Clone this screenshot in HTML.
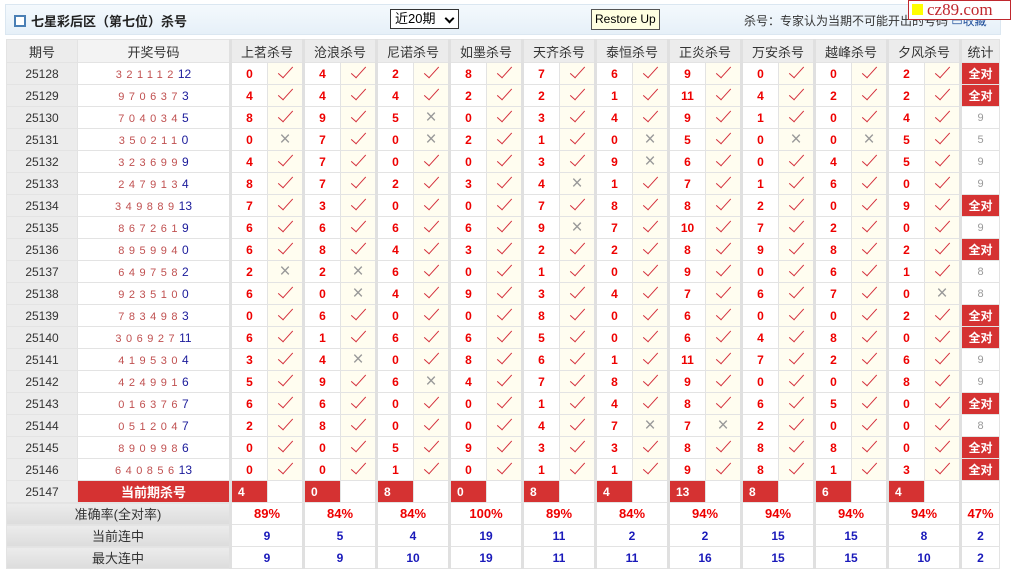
<!DOCTYPE html>
<html><head><meta charset="utf-8"><style>
body{margin:0;width:1012px;height:577px;background:#fff;font-family:"Liberation Sans","Noto Sans CJK SC",sans-serif;position:relative;overflow:hidden}
.top{position:absolute;left:5px;top:4px;width:994px;height:29px;background:linear-gradient(#f4f9fd,#e6f0f8);border:1px solid #dbe7f1}
.title{position:absolute;left:8px;top:6px;font-size:13px;font-weight:bold;color:#222}
.title i{display:inline-block;width:8px;height:8px;border:2px solid #4a7fb5;margin-right:5px;vertical-align:-1px;background:#fff}
.sel{position:absolute;left:384px;top:4px;width:69px;border:1px solid #333;background:#fff;font-size:13px;line-height:18px;padding-left:4px;box-sizing:border-box;height:20px}
.sel b{position:absolute;right:5px;top:5px;width:5px;height:5px;border:solid #000;border-width:0 2px 2px 0;transform:rotate(45deg)}
.tip{position:absolute;left:585px;top:4px;height:19px;padding:0 3px;border:1px solid #555;background:#ffffe1;font-size:12px;line-height:19px}
.rt{position:absolute;left:738px;top:7px;font-size:12px;color:#333}
.rt span{color:#1f4e9a}
.logo{position:absolute;left:908px;top:0;width:101px;height:18px;border:1px solid #c0282e;background:#fff;font-family:"Liberation Serif",serif;color:#c0282e;font-size:17px;line-height:17px}
.logo i{display:inline-block;width:11px;height:11px;background:#ff0;margin:0 4px 0 3px}
table{position:absolute;left:6px;top:39px;border-collapse:collapse;table-layout:fixed;border:1px solid #d5e2ec;font-size:12px}
td{height:21px;padding:0;border:1px solid #e3e3e3;text-align:center;white-space:nowrap;overflow:hidden}
th{height:22px;padding:0;border:1px solid #e3e3e3;background:#ececec;font-weight:normal;font-size:13px;color:#333}
td.q{background:#ececec;color:#333;font-size:12px}
td.k{color:#c05050;letter-spacing:4.5px;font-size:11px}
td.k span{color:#1a1a9a;letter-spacing:0;font-size:12px}
.g{border-left:3px solid #e0e0e0}
td.n{color:#e00;font-weight:bold;font-size:12px}
td.c,td.x{background:#fffdf0}
td.c::after{content:"";display:inline-block;width:6px;height:14px;border:solid #d4303c;border-width:0 1.5px 1.5px 0;transform:rotate(42deg);margin-top:-4px}
td.x::after{content:"×";color:#999;font-size:19px;line-height:18px;font-weight:normal}
td.a{background:#d53232;color:#fff;font-weight:bold;font-size:12px}
td.s{color:#999;font-size:11px}
td.r{background:#d53232;color:#fff;font-weight:bold;text-align:left;padding-left:6px}
td.cur{background:#d53232;color:#fff;font-weight:bold;font-size:13px}
td.L{background:linear-gradient(#ececec,#dcdcdc);color:#333;font-size:13px}
td.p{color:#e00;font-weight:bold;font-size:13px}
td.b{color:#1a1aba;font-weight:bold}
</style></head><body>
<div class="top"><div class="title"><i></i>七星彩后区（第七位）杀号</div>
<div class="sel">近20期<b></b></div>
<div class="tip">Restore Up</div>
<div class="rt">杀号：专家认为当期不可能开出的号码 <span>▭收藏</span></div></div>
<div class="logo"><i></i>cz89.com</div>
<table>
<colgroup><col style="width:71px"><col style="width:153px">
<col style="width:37px"><col style="width:36px"><col style="width:37px"><col style="width:36px"><col style="width:37px"><col style="width:36px"><col style="width:37px"><col style="width:36px"><col style="width:37px"><col style="width:36px"><col style="width:37px"><col style="width:36px"><col style="width:37px"><col style="width:36px"><col style="width:37px"><col style="width:36px"><col style="width:37px"><col style="width:36px"><col style="width:37px"><col style="width:36px"><col style="width:39px"></colgroup>
<tr><th>期号</th><th style="background:#f3f3f3">开奖号码</th><th colspan=2 class="g">上茗杀号</th><th colspan=2 class="g">沧浪杀号</th><th colspan=2 class="g">尼诺杀号</th><th colspan=2 class="g">如墨杀号</th><th colspan=2 class="g">天齐杀号</th><th colspan=2 class="g">泰恒杀号</th><th colspan=2 class="g">正炎杀号</th><th colspan=2 class="g">万安杀号</th><th colspan=2 class="g">越峰杀号</th><th colspan=2 class="g">夕风杀号</th><th class="g">统计</th></tr>
<tr><td class=q>25128</td><td class=k>321112<span>12</span></td><td class="n g">0</td><td class=c></td><td class="n g">4</td><td class=c></td><td class="n g">2</td><td class=c></td><td class="n g">8</td><td class=c></td><td class="n g">7</td><td class=c></td><td class="n g">6</td><td class=c></td><td class="n g">9</td><td class=c></td><td class="n g">0</td><td class=c></td><td class="n g">0</td><td class=c></td><td class="n g">2</td><td class=c></td><td class="a g">全对</td></tr>
<tr><td class=q>25129</td><td class=k>970637<span>3</span></td><td class="n g">4</td><td class=c></td><td class="n g">4</td><td class=c></td><td class="n g">4</td><td class=c></td><td class="n g">2</td><td class=c></td><td class="n g">2</td><td class=c></td><td class="n g">1</td><td class=c></td><td class="n g">11</td><td class=c></td><td class="n g">4</td><td class=c></td><td class="n g">2</td><td class=c></td><td class="n g">2</td><td class=c></td><td class="a g">全对</td></tr>
<tr><td class=q>25130</td><td class=k>704034<span>5</span></td><td class="n g">8</td><td class=c></td><td class="n g">9</td><td class=c></td><td class="n g">5</td><td class=x></td><td class="n g">0</td><td class=c></td><td class="n g">3</td><td class=c></td><td class="n g">4</td><td class=c></td><td class="n g">9</td><td class=c></td><td class="n g">1</td><td class=c></td><td class="n g">0</td><td class=c></td><td class="n g">4</td><td class=c></td><td class="s g">9</td></tr>
<tr><td class=q>25131</td><td class=k>350211<span>0</span></td><td class="n g">0</td><td class=x></td><td class="n g">7</td><td class=c></td><td class="n g">0</td><td class=x></td><td class="n g">2</td><td class=c></td><td class="n g">1</td><td class=c></td><td class="n g">0</td><td class=x></td><td class="n g">5</td><td class=c></td><td class="n g">0</td><td class=x></td><td class="n g">0</td><td class=x></td><td class="n g">5</td><td class=c></td><td class="s g">5</td></tr>
<tr><td class=q>25132</td><td class=k>323699<span>9</span></td><td class="n g">4</td><td class=c></td><td class="n g">7</td><td class=c></td><td class="n g">0</td><td class=c></td><td class="n g">0</td><td class=c></td><td class="n g">3</td><td class=c></td><td class="n g">9</td><td class=x></td><td class="n g">6</td><td class=c></td><td class="n g">0</td><td class=c></td><td class="n g">4</td><td class=c></td><td class="n g">5</td><td class=c></td><td class="s g">9</td></tr>
<tr><td class=q>25133</td><td class=k>247913<span>4</span></td><td class="n g">8</td><td class=c></td><td class="n g">7</td><td class=c></td><td class="n g">2</td><td class=c></td><td class="n g">3</td><td class=c></td><td class="n g">4</td><td class=x></td><td class="n g">1</td><td class=c></td><td class="n g">7</td><td class=c></td><td class="n g">1</td><td class=c></td><td class="n g">6</td><td class=c></td><td class="n g">0</td><td class=c></td><td class="s g">9</td></tr>
<tr><td class=q>25134</td><td class=k>349889<span>13</span></td><td class="n g">7</td><td class=c></td><td class="n g">3</td><td class=c></td><td class="n g">0</td><td class=c></td><td class="n g">0</td><td class=c></td><td class="n g">7</td><td class=c></td><td class="n g">8</td><td class=c></td><td class="n g">8</td><td class=c></td><td class="n g">2</td><td class=c></td><td class="n g">0</td><td class=c></td><td class="n g">9</td><td class=c></td><td class="a g">全对</td></tr>
<tr><td class=q>25135</td><td class=k>867261<span>9</span></td><td class="n g">6</td><td class=c></td><td class="n g">6</td><td class=c></td><td class="n g">6</td><td class=c></td><td class="n g">6</td><td class=c></td><td class="n g">9</td><td class=x></td><td class="n g">7</td><td class=c></td><td class="n g">10</td><td class=c></td><td class="n g">7</td><td class=c></td><td class="n g">2</td><td class=c></td><td class="n g">0</td><td class=c></td><td class="s g">9</td></tr>
<tr><td class=q>25136</td><td class=k>895994<span>0</span></td><td class="n g">6</td><td class=c></td><td class="n g">8</td><td class=c></td><td class="n g">4</td><td class=c></td><td class="n g">3</td><td class=c></td><td class="n g">2</td><td class=c></td><td class="n g">2</td><td class=c></td><td class="n g">8</td><td class=c></td><td class="n g">9</td><td class=c></td><td class="n g">8</td><td class=c></td><td class="n g">2</td><td class=c></td><td class="a g">全对</td></tr>
<tr><td class=q>25137</td><td class=k>649758<span>2</span></td><td class="n g">2</td><td class=x></td><td class="n g">2</td><td class=x></td><td class="n g">6</td><td class=c></td><td class="n g">0</td><td class=c></td><td class="n g">1</td><td class=c></td><td class="n g">0</td><td class=c></td><td class="n g">9</td><td class=c></td><td class="n g">0</td><td class=c></td><td class="n g">6</td><td class=c></td><td class="n g">1</td><td class=c></td><td class="s g">8</td></tr>
<tr><td class=q>25138</td><td class=k>923510<span>0</span></td><td class="n g">6</td><td class=c></td><td class="n g">0</td><td class=x></td><td class="n g">4</td><td class=c></td><td class="n g">9</td><td class=c></td><td class="n g">3</td><td class=c></td><td class="n g">4</td><td class=c></td><td class="n g">7</td><td class=c></td><td class="n g">6</td><td class=c></td><td class="n g">7</td><td class=c></td><td class="n g">0</td><td class=x></td><td class="s g">8</td></tr>
<tr><td class=q>25139</td><td class=k>783498<span>3</span></td><td class="n g">0</td><td class=c></td><td class="n g">6</td><td class=c></td><td class="n g">0</td><td class=c></td><td class="n g">0</td><td class=c></td><td class="n g">8</td><td class=c></td><td class="n g">0</td><td class=c></td><td class="n g">6</td><td class=c></td><td class="n g">0</td><td class=c></td><td class="n g">0</td><td class=c></td><td class="n g">2</td><td class=c></td><td class="a g">全对</td></tr>
<tr><td class=q>25140</td><td class=k>306927<span>11</span></td><td class="n g">6</td><td class=c></td><td class="n g">1</td><td class=c></td><td class="n g">6</td><td class=c></td><td class="n g">6</td><td class=c></td><td class="n g">5</td><td class=c></td><td class="n g">0</td><td class=c></td><td class="n g">6</td><td class=c></td><td class="n g">4</td><td class=c></td><td class="n g">8</td><td class=c></td><td class="n g">0</td><td class=c></td><td class="a g">全对</td></tr>
<tr><td class=q>25141</td><td class=k>419530<span>4</span></td><td class="n g">3</td><td class=c></td><td class="n g">4</td><td class=x></td><td class="n g">0</td><td class=c></td><td class="n g">8</td><td class=c></td><td class="n g">6</td><td class=c></td><td class="n g">1</td><td class=c></td><td class="n g">11</td><td class=c></td><td class="n g">7</td><td class=c></td><td class="n g">2</td><td class=c></td><td class="n g">6</td><td class=c></td><td class="s g">9</td></tr>
<tr><td class=q>25142</td><td class=k>424991<span>6</span></td><td class="n g">5</td><td class=c></td><td class="n g">9</td><td class=c></td><td class="n g">6</td><td class=x></td><td class="n g">4</td><td class=c></td><td class="n g">7</td><td class=c></td><td class="n g">8</td><td class=c></td><td class="n g">9</td><td class=c></td><td class="n g">0</td><td class=c></td><td class="n g">0</td><td class=c></td><td class="n g">8</td><td class=c></td><td class="s g">9</td></tr>
<tr><td class=q>25143</td><td class=k>016376<span>7</span></td><td class="n g">6</td><td class=c></td><td class="n g">6</td><td class=c></td><td class="n g">0</td><td class=c></td><td class="n g">0</td><td class=c></td><td class="n g">1</td><td class=c></td><td class="n g">4</td><td class=c></td><td class="n g">8</td><td class=c></td><td class="n g">6</td><td class=c></td><td class="n g">5</td><td class=c></td><td class="n g">0</td><td class=c></td><td class="a g">全对</td></tr>
<tr><td class=q>25144</td><td class=k>051204<span>7</span></td><td class="n g">2</td><td class=c></td><td class="n g">8</td><td class=c></td><td class="n g">0</td><td class=c></td><td class="n g">0</td><td class=c></td><td class="n g">4</td><td class=c></td><td class="n g">7</td><td class=x></td><td class="n g">7</td><td class=x></td><td class="n g">2</td><td class=c></td><td class="n g">0</td><td class=c></td><td class="n g">0</td><td class=c></td><td class="s g">8</td></tr>
<tr><td class=q>25145</td><td class=k>890998<span>6</span></td><td class="n g">0</td><td class=c></td><td class="n g">0</td><td class=c></td><td class="n g">5</td><td class=c></td><td class="n g">9</td><td class=c></td><td class="n g">3</td><td class=c></td><td class="n g">3</td><td class=c></td><td class="n g">8</td><td class=c></td><td class="n g">8</td><td class=c></td><td class="n g">8</td><td class=c></td><td class="n g">0</td><td class=c></td><td class="a g">全对</td></tr>
<tr><td class=q>25146</td><td class=k>640856<span>13</span></td><td class="n g">0</td><td class=c></td><td class="n g">0</td><td class=c></td><td class="n g">1</td><td class=c></td><td class="n g">0</td><td class=c></td><td class="n g">1</td><td class=c></td><td class="n g">1</td><td class=c></td><td class="n g">9</td><td class=c></td><td class="n g">8</td><td class=c></td><td class="n g">1</td><td class=c></td><td class="n g">3</td><td class=c></td><td class="a g">全对</td></tr>
<tr><td class=q>25147</td><td class=cur>当前期杀号</td><td class="r g">4</td><td></td><td class="r g">0</td><td></td><td class="r g">8</td><td></td><td class="r g">0</td><td></td><td class="r g">8</td><td></td><td class="r g">4</td><td></td><td class="r g">13</td><td></td><td class="r g">8</td><td></td><td class="r g">6</td><td></td><td class="r g">4</td><td></td><td class=g></td></tr>
<tr><td colspan=2 class=L>准确率(全对率)</td><td colspan=2 class="p g">89%</td><td colspan=2 class="p g">84%</td><td colspan=2 class="p g">84%</td><td colspan=2 class="p g">100%</td><td colspan=2 class="p g">89%</td><td colspan=2 class="p g">84%</td><td colspan=2 class="p g">94%</td><td colspan=2 class="p g">94%</td><td colspan=2 class="p g">94%</td><td colspan=2 class="p g">94%</td><td class="p g">47%</td></tr>
<tr><td colspan=2 class=L>当前连中</td><td colspan=2 class="b g">9</td><td colspan=2 class="b g">5</td><td colspan=2 class="b g">4</td><td colspan=2 class="b g">19</td><td colspan=2 class="b g">11</td><td colspan=2 class="b g">2</td><td colspan=2 class="b g">2</td><td colspan=2 class="b g">15</td><td colspan=2 class="b g">15</td><td colspan=2 class="b g">8</td><td class="b g">2</td></tr>
<tr><td colspan=2 class=L>最大连中</td><td colspan=2 class="b g">9</td><td colspan=2 class="b g">9</td><td colspan=2 class="b g">10</td><td colspan=2 class="b g">19</td><td colspan=2 class="b g">11</td><td colspan=2 class="b g">11</td><td colspan=2 class="b g">16</td><td colspan=2 class="b g">15</td><td colspan=2 class="b g">15</td><td colspan=2 class="b g">10</td><td class="b g">2</td></tr>
</table>
</body></html>
